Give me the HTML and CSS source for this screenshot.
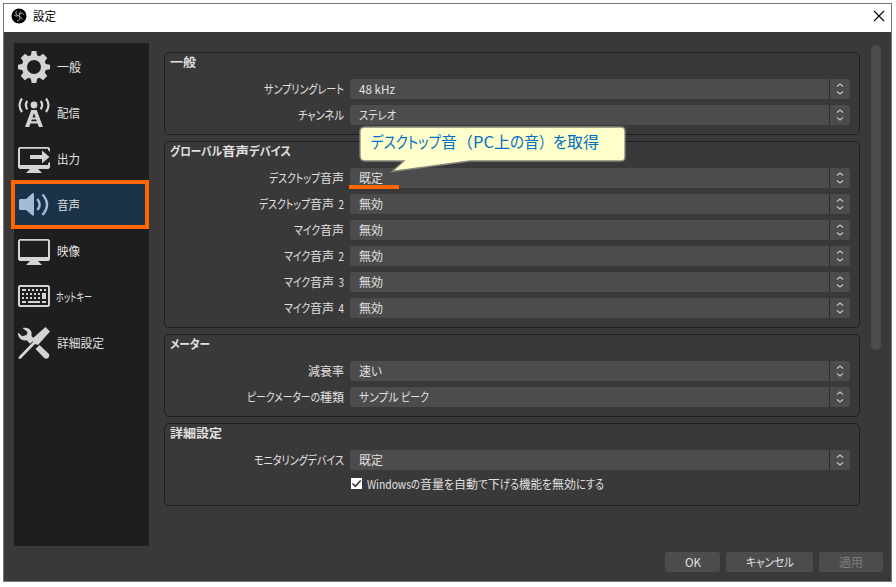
FILE: index.html
```html
<!DOCTYPE html>
<html lang="ja">
<head>
<meta charset="utf-8">
<title>設定</title>
<link rel="stylesheet" href="styles.css">
</head>
<body>
<svg class="defs" aria-hidden="true">
  <symbol id="updown" viewBox="0 0 8 12"><path d="M1 3.500 4 1l3 2.500M1 8.500 4 11l3-2.500"/></symbol>
</svg>
<div class="window">
  <header class="titlebar">
    <svg class="logo" viewBox="0 0 16 16"><circle cx="8" cy="8" r="7.500"/><path d="M7.500 7.600C4.800 7 4.200 4.500 5.800 2.700M8.300 7.400C9 4.800 11.800 4.600 13 6.700M8 8.300c1.900 1.900.7 4.500-2 4.600M7.400 7.600C5.500 8.200 4 8 3.200 7M8.400 7.500C8 5.700 8.600 4.200 10 3.600M8.200 8.400c1.500.5 2.700 1.600 2.700 3"/></svg>
    <span class="title"><span class="fit" data-w="23">設定</span></span>
    <svg class="close" viewBox="0 0 12 12"><path d="M1 1l10 10M11 1 1 11"/></svg>
  </header>
  <div class="body">
    <nav class="sidebar">
      <div class="item"><svg viewBox="0 0 32 32"><path fill-rule="evenodd" d="M13.700 0h4.600l.8 4.200 2.500 1 3.500-2.400 4.100 4.100-2.400 3.500 1 2.500 4.200.8v4.600l-4.200.8-1 2.500 2.400 3.500-4.100 4.100-3.500-2.400-2.500 1-.8 4.200h-4.600l-.8-4.200-2.500-1-3.500 2.400-4.100-4.100 2.400-3.500-1-2.500L0 18.300v-4.600l4.200-.8 1-2.500-2.400-3.500 4.100-4.100 3.500 2.400 2.500-1zM16 9a7 7 0 1 0 0 14 7 7 0 0 0 0-14z"/></svg><span class="fit" data-w="24">一般</span></div>
      <div class="item"><svg viewBox="0 0 32 32"><circle cx="16" cy="8" r="3.400"/><path fill-rule="evenodd" d="M13.300 13h5.400L25 30h-4.200l-1.200-3.500h-7.200L11.200 30H7zM16 16l-1.500 4.500h3zM13.800 22.500l-.6 1.800h5.600l-.6-1.800z"/><path class="line" d="M4 1.500Q-1 8 4 15M9.300 4Q6.400 8 9.300 12.300M22.700 4Q25.600 8 22.700 12.300M28 1.500Q33 8 28 15"/></svg><span class="fit" data-w="23">配信</span></div>
      <div class="item"><svg viewBox="0 0 32 32"><path d="M1.500 4h29L32 5.500V9l-2-2V5.800H2V22h28v-1.500l2-2v6L30.500 26H20l4 4H8l4-4H1.500L0 24.500v-19zM12 12h12V7.500L31.500 14 24 20.300V16H12z"/></svg><span class="fit" data-w="23">出力</span></div>
      <div class="item active"><svg viewBox="0 0 32 32"><path d="M2 10h6l6.500-5.800H16v22.300h-1.500L8 21H2l-1-1v-9z"/><path class="line" d="M19.300 10Q24 15.500 19.300 21M24.500 5.500Q33.500 15.500 24.500 26"/></svg><span class="fit" data-w="23">音声</span><i class="highlight"></i></div>
      <div class="item"><svg viewBox="0 0 32 32"><path fill-rule="evenodd" d="M1.500 4h29L32 5.500v19L30.500 26H20l4 4H8l4-4H1.500L0 24.500v-19zM2 5.800V22h28V5.800z"/></svg><span class="fit" data-w="23">映像</span></div>
      <div class="item"><svg viewBox="0 0 32 32"><path fill-rule="evenodd" d="M1.500 4h29L32 5.500v19L30.500 26h-29L0 24.500v-19zM2 6v18h28V6z"/><path d="M4 8h4v2H4zm6 0h2v2h-2zm4 0h2v2h-2zm4 0h2v2h-2zm4 0h2v2h-2zm4 0h2v2h-2zM4 12h2v2H4zm4 0h2v2H8zm4 0h2v2h-2zm4 0h2v2h-2zm4 0h2v2h-2zm4 0h4v6h-4zM4 16h2v2H4zm4 0h2v2H8zm4 0h2v2h-2zm4 0h2v2h-2zm4 0h2v2h-2zM4 20h4v2H4zm6 0h12v2H10zm14 0h4v2h-4z"/></svg><span class="fit tight" data-w="36">ホットキー</span></div>
      <div class="item"><svg viewBox="0 0 32 32"><path d="M4.500 1C8 0 11.500 1 13 4c.8 1.600.7 3.500.4 5l3.400 3.200-4.700 4.600-3.400-3.500C5.500 14 2 12.500.7 9.500c-.6-1.200-.8-2.700-.6-4l4 3.800 4.500-1.400L9.500 5zM27.500 0 32 4.500 20 18l-3-1L3 31.500l-2.500.5.500-2.500L15 15l-1-3zM17.500 22l4-4 9 8.500c1.200 1.200 1 3.200-.2 4.300-1.200 1.200-3 1.200-4.300 0z"/></svg><span class="fit" data-w="47">詳細設定</span></div>
    </nav>
    <main class="content">
      <section class="group">
        <h2><span class="fit" data-w="26">一般</span></h2>
        <div class="row"><label><span class="fit" data-w="80">サンプリングレート</span></label><div class="combo"><span class="fit" data-w="36">48 kHz</span><svg><use href="#updown"/></svg></div></div>
        <div class="row"><label><span class="fit" data-w="46">チャンネル</span></label><div class="combo"><span class="fit" data-w="37">ステレオ</span><svg><use href="#updown"/></svg></div></div>
      </section>
      <section class="group">
        <h2><span class="fit" data-w="52">グローバル</span><span class="fit" data-w="27">音声</span><span class="fit" data-w="42">デバイス</span></h2>
        <div class="row"><label><span class="fit" data-w="51">デスクトップ</span><span class="fit" data-w="24">音声</span></label>
          <div class="combo"><span class="fit" data-w="24">既定</span><svg><use href="#updown"/></svg><i class="underline"></i>
            <div class="callout"><svg class="bubble" viewBox="0 0 270 48"><path d="M7 1h256q4 0 4 4v26q0 4-4 4H112L34 45.500 46 35H7q-5 0-5-5V5q0-4 5-4z"/></svg><p><span class="fit" data-w="70">デスクトップ</span><span class="fit" data-w="16">音</span><span class="fit full" data-w="16">（</span><span class="fit" data-w="21">PC</span><span class="fit" data-w="16">上</span><span class="fit" data-w="14">の</span><span class="fit" data-w="15">音</span><span class="fit full" data-w="14">）</span><span class="fit" data-w="14">を</span><span class="fit" data-w="32">取得</span></p></div>
          </div></div>
        <div class="row"><label><span class="fit" data-w="51">デスクトップ</span><span class="fit" data-w="24">音声</span><span class="fit" data-w="10">  2</span></label><div class="combo"><span class="fit" data-w="24">無効</span><svg><use href="#updown"/></svg></div></div>
        <div class="row"><label><span class="fit" data-w="26">マイク</span><span class="fit" data-w="24">音声</span></label><div class="combo"><span class="fit" data-w="24">無効</span><svg><use href="#updown"/></svg></div></div>
        <div class="row"><label><span class="fit" data-w="26">マイク</span><span class="fit" data-w="24">音声</span><span class="fit" data-w="10">  2</span></label><div class="combo"><span class="fit" data-w="24">無効</span><svg><use href="#updown"/></svg></div></div>
        <div class="row"><label><span class="fit" data-w="26">マイク</span><span class="fit" data-w="24">音声</span><span class="fit" data-w="10">  3</span></label><div class="combo"><span class="fit" data-w="24">無効</span><svg><use href="#updown"/></svg></div></div>
        <div class="row"><label><span class="fit" data-w="26">マイク</span><span class="fit" data-w="24">音声</span><span class="fit" data-w="10">  4</span></label><div class="combo"><span class="fit" data-w="24">無効</span><svg><use href="#updown"/></svg></div></div>
      </section>
      <section class="group">
        <h2><span class="fit" data-w="40">メーター</span></h2>
        <div class="row"><label><span class="fit" data-w="36">減衰率</span></label><div class="combo"><span class="fit" data-w="12">速</span><span class="fit" data-w="11">い</span><svg><use href="#updown"/></svg></div></div>
        <div class="row"><label><span class="fit" data-w="73">ピークメーターの</span><span class="fit" data-w="24">種類</span></label><div class="combo"><span class="fit" data-w="42">サンプル </span><span class="fit" data-w="28">ピーク</span><svg><use href="#updown"/></svg></div></div>
      </section>
      <section class="group">
        <h2><span class="fit" data-w="52">詳細設定</span></h2>
        <div class="row"><label><span class="fit" data-w="90">モニタリングデバイス</span></label><div class="combo"><span class="fit" data-w="24">既定</span><svg><use href="#updown"/></svg></div></div>
        <div class="check"><svg viewBox="0 0 11 11"><path d="M1.500 5.500 4.300 8.300 9.700 2.500"/></svg><span class="fit" data-w="44">Windows</span><span class="fit" data-w="9">の</span><span class="fit" data-w="24">音量</span><span class="fit" data-w="10">を</span><span class="fit" data-w="24">自動</span><span class="fit" data-w="10">で</span><span class="fit" data-w="12">下</span><span class="fit" data-w="19">げる</span><span class="fit" data-w="23">機能</span><span class="fit" data-w="10">を</span><span class="fit" data-w="24">無効</span><span class="fit" data-w="28">にする</span></div>
      </section>
    </main>
    <div class="scrollbar"></div>
  </div>
  <footer class="footer">
    <button class="ok"><span class="fit" data-w="16">OK</span></button>
    <button class="cancel"><span class="fit" data-w="48">キャンセル</span></button>
    <button class="apply" disabled><span class="fit" data-w="24">適用</span></button>
  </footer>
</div>
<script src="fit.js"></script>
</body>
</html>
```
FILE: styles.css
```css
* { box-sizing: border-box; }
body { margin: 0; padding: 3px; background: #fff; font: 12px/20px "Noto Sans CJK JP", sans-serif; color: #e1e0e1; }
.defs { position: absolute; width: 0; height: 0; }
.window { width: 889px; height: 579px; border: 1px solid #777; background: #3a3939; display: flex; flex-direction: column; }
.fit { display: inline-block; white-space: pre; transform-origin: 0 50%; font-feature-settings: "palt"; flex: none; }
.full { font-feature-settings: normal; }

.titlebar { height: 28px; flex: none; background: #fff; color: #000; display: flex; align-items: center; padding: 0 6px 4px 7px; }
.logo { width: 16px; height: 16px; margin-right: 6px; }
.logo path { fill: none; stroke: #ccc; stroke-width: .9; }
.title { flex: 1; display: flex; }
.close { width: 12px; height: 12px; fill: none; stroke: #000; stroke-width: 1.100; }

.body { display: flex; height: 514px; padding: 11px 10px 0; }
.sidebar { width: 135px; height: 503px; background: #1f1e1f; padding-top: 1px; }
.item { position: relative; height: 46px; padding-left: 4px; display: flex; align-items: center; gap: 7px; }
.item svg { width: 32px; height: 32px; fill: #d4d4d4; stroke: none; }
.item .line { fill: none; stroke: #d4d4d4; stroke-width: 2.200; }
.item .tight { margin-left: -1px; }
.active { background: #1a3349; }
.active svg { fill: #a3bcd6; }
.active .line { stroke: #a3bcd6; stroke-width: 2.500; }
.highlight { position: absolute; left: -3px; top: -2px; width: 138px; height: 49px; border: 4px solid #ff6600; }

.content { width: 696px; margin: 9px 0 0 15px; display: flex; flex-direction: column; gap: 6px; }
.group { border: 1px solid #1f1e1f; border-radius: 5px; padding: 0 9px 9px 5px; display: flex; flex-direction: column; gap: 6px; }
.group h2 { margin: 0; height: 20px; font-size: 12px; line-height: 18px; font-weight: 700; display: flex; }
.row { display: flex; height: 20px; }
.row label { width: 174px; display: flex; justify-content: flex-end; }
.combo { position: relative; width: 500px; margin-left: 6px; padding-left: 9px; border-radius: 3px; display: flex;
  background: linear-gradient(90deg, transparent 479px, #2d2c2d 479px 480px, transparent 480px), #4c4c4c; }
.combo > svg { width: 8px; height: 12px; margin: 4px 6px 0 auto; fill: none; stroke: #c4c4c4; stroke-width: 1.100; }
.underline { position: absolute; left: -1px; bottom: -1px; width: 50px; height: 4px; background: #ff6600; }
.callout { position: absolute; left: 8px; top: -42px; width: 270px; height: 48px; z-index: 2; }
.bubble { position: absolute; inset: 0; width: 270px; height: 48px; fill: #ffffcc; stroke: #85857c; stroke-width: 1.300; }
.callout p { position: relative; margin: 0; padding: 4px 0 0 13px; display: flex; font-size: 16px; line-height: 22px; color: #0070c0; }
.check { display: flex; height: 20px; margin: -2px 0 2px 180px; line-height: 19px; }
.check svg { width: 11px; height: 11px; margin: 4px 5px 0 1px; background: #fff; fill: none; stroke: #333; stroke-width: 1.500; }
.scrollbar { width: 10px; height: 305px; border-radius: 5px; background: #4c4c4c; margin: 2px 0 0 11px; }

.footer { display: flex; justify-content: flex-end; gap: 6px; padding: 6px 8px 0 0; }
button { height: 20px; padding: 0; border: 0; border-radius: 3px; background: #4c4c4c; color: inherit; font: inherit; line-height: 19px; display: flex; justify-content: center; }
.ok { width: 55px; }
.cancel { width: 87px; }
.apply { width: 64px; color: #7d7d7d; }
```
FILE: fit.js
```javascript
// Condense each text run to its column width in px.
document.querySelectorAll(".fit").forEach(function (el) {
  var target = Number(el.dataset.w);
  var natural = el.getBoundingClientRect().width;
  el.style.width = target + "px";
  el.style.transform = "scaleX(" + target / natural + ")";
});
```
